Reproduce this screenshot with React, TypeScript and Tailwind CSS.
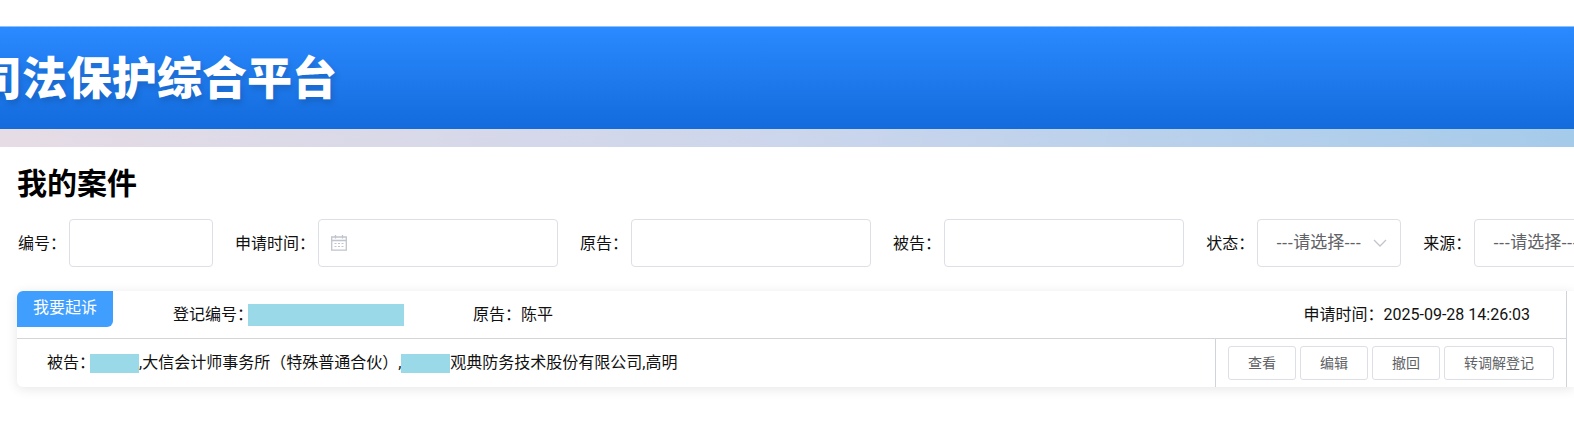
import type { ReactNode } from "react";

function Field({ id, label, children }: { id: string; label: string; children: ReactNode }) {
  return (
    <div className="flex shrink-0 items-center gap-[3px]">
      <label htmlFor={id} className="pt-0.5 whitespace-nowrap">
        {label}：
      </label>
      {children}
    </div>
  );
}

function TextField({ id, label, width }: { id: string; label: string; width: string }) {
  return (
    <Field id={id} label={label}>
      <input id={id} type="text" className={`h-12 rounded border border-[#dcdfe6] bg-white px-4 outline-none ${width}`} />
    </Field>
  );
}

function SelectField({ id, label }: { id: string; label: string }) {
  return (
    <Field id={id} label={label}>
      <div className="relative">
        <select
          id={id}
          className="h-12 w-36 appearance-none rounded border border-[#dcdfe6] bg-white pl-[18px] font-['Liberation_Sans','Noto_Sans_CJK_SC',sans-serif] text-[17px] text-[#606266] outline-none"
        >
          <option>---请选择---</option>
        </select>
        <svg
          viewBox="0 0 14 8"
          className="pointer-events-none absolute top-5 right-[14px] h-2 w-[14px] fill-none stroke-[#c0c4cc]"
          aria-hidden="true"
        >
          <path d="M1 1l6 6 6-6" strokeWidth="1.3" />
        </svg>
      </div>
    </Field>
  );
}

function CalendarIcon() {
  return (
    <svg
      viewBox="0 0 16 16"
      className="pointer-events-none absolute top-4 left-[13px] size-4 fill-none stroke-[#c0c4cc]"
      aria-hidden="true"
    >
      <path d="M.7 2h14.6v13.2H.7zM.7 5.5h14.6M4.5 0v3.5M11.5 0v3.5" strokeWidth="1.3" />
      <path d="M3.5 8.5h2m1.5 0h2m1.5 0h2M3.5 11.5h2m1.5 0h2m1.5 0h2" />
    </svg>
  );
}

const actions = ["查看", "编辑", "撤回", "转调解登记"];

export default function App() {
  return (
    <div className="overflow-hidden bg-white pt-[26px] pb-7 font-[Roboto,'Noto_Sans_CJK_SC',sans-serif] text-base leading-6 text-[#111]">
      <header className="flex h-[103px] items-center overflow-hidden border-t border-[#8fc0fb] bg-linear-to-b from-[#2a8aff] to-[#136bdc] pb-1">
        <div className="-ml-[23px] whitespace-nowrap font-['Noto_Sans_CJK_SC',sans-serif] text-[45px] leading-[60px] font-black text-white [text-shadow:2px_4px_6px_rgba(0,0,0,0.15)]">
          司法保护综合平台
        </div>
      </header>
      <div className="h-[18px] bg-linear-to-r from-[#e6dce5] via-[#ccd6ec] to-[#a5cbea]" />

      <main className="pt-[17px] pl-[17px]">
        <h1 className="text-[30px] leading-10 font-bold text-black">我的案件</h1>

        <form className="mt-[15px] flex gap-[22px] pl-px">
          <TextField id="number" label="编号" width="w-36" />
          <Field id="date" label="申请时间">
            <div className="relative">
              <input
                id="date"
                type="text"
                className="h-12 w-60 rounded border border-[#dcdfe6] bg-white pr-4 pl-10 outline-none"
              />
              <CalendarIcon />
            </div>
          </Field>
          <TextField id="plaintiff" label="原告" width="w-60" />
          <TextField id="defendant" label="被告" width="w-60" />
          <SelectField id="status" label="状态" />
          <SelectField id="source" label="来源" />
        </form>

        <article className="mt-6 flex rounded-l-md bg-white pr-[7px] shadow-[0_2px_12px_rgba(0,0,0,0.1)]">
          <div className="flex-1 border-r border-[#d0d3d8]">
            <div className="flex h-12 border-b border-[#d3d5d9]">
              <div className="h-9 rounded-tl-md rounded-br-md bg-[#409eff] px-4 leading-[34px] text-white">
                我要起诉
              </div>
              <div className="ml-[60px] flex items-center">
                登记编号：
                <span className="-ml-[5px] h-[22px] w-[156px] bg-[#99d9e8]" />
              </div>
              <div className="ml-[69px] flex items-center">原告：陈平</div>
              <div className="ml-auto flex items-center pr-9">申请时间：2025-09-28 14:26:03</div>
            </div>
            <div className="flex h-12">
              <div className="flex flex-1 items-center pl-[30px]">
                被告：
                <span className="-ml-[5px] h-[19px] w-[49px] bg-[#99d9e8]" />
                ,大信会计师事务所（特殊普通合伙）,
                <span className="h-[19px] w-[49px] bg-[#99d9e8]" />
                观典防务技术股份有限公司,高明
              </div>
              <div className="flex items-center gap-1 border-l border-[#d0d3d8] px-3">
                {actions.map((name) => (
                  <button
                    key={name}
                    type="button"
                    className="h-[34px] rounded-[3px] border border-[#dcdfe6] bg-white px-[19px] text-sm text-[#606266]"
                  >
                    {name}
                  </button>
                ))}
              </div>
            </div>
          </div>
        </article>
      </main>
    </div>
  );
}
